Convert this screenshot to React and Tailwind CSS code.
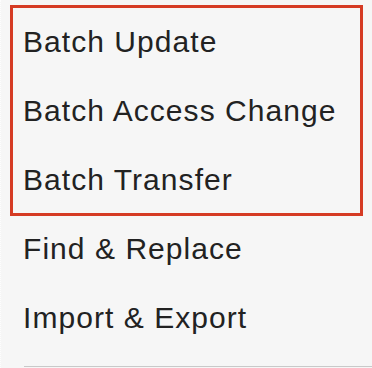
const top = ["Batch Update", "Batch Access Change", "Batch Transfer"];
const rest = ["Find & Replace", "Import & Export"];

function Row({ label }) {
  return (
    <div className="h-[69px] pl-[11px] text-[30px] leading-[69px] tracking-[1.05px] text-[#222222] whitespace-nowrap">
      {label}
    </div>
  );
}

export default function App() {
  return (
    <div className="h-[368px] w-[372px] overflow-hidden bg-[#f6f6f6] border-l border-dotted border-[#fdfdfd] font-['Liberation_Sans',Arial,sans-serif]">
      <div className="pt-[7px] pl-[11px] pr-[11px]">
        {/* highlighted group */}
        <div className="outline-3 outline-solid outline-[#d53b24] -outline-offset-1">
          {top.map((t) => (
            <Row key={t} label={t} />
          ))}
        </div>
        {rest.map((t) => (
          <Row key={t} label={t} />
        ))}
      </div>
      <div className="mt-[14px] ml-[23px] h-px bg-[#c9c9c9]" />
    </div>
  );
}
